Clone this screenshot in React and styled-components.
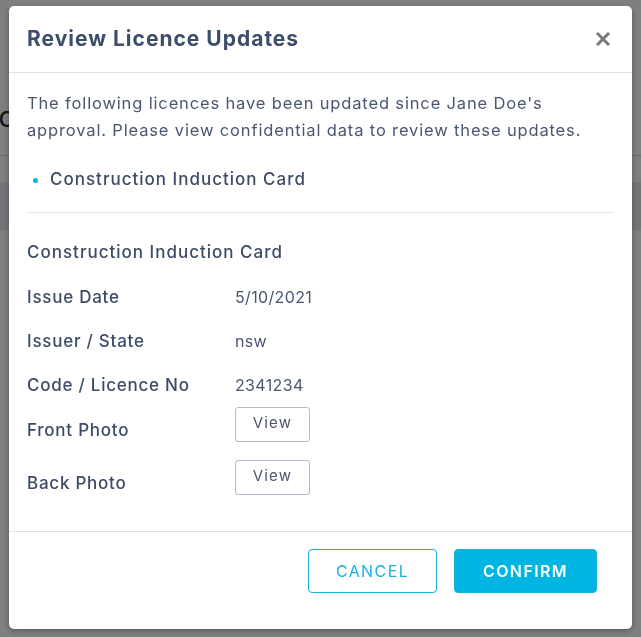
import styled, { createGlobalStyle } from "styled-components";

const GlobalStyle = createGlobalStyle`
  * { box-sizing: border-box; }
  html, body { margin: 0; padding: 0; }
  body {
    font-family: "Inter", "Noto Sans", sans-serif;
    background: #ffffff;
  }
`;

const details = [
  { label: "Issue Date", value: "5/10/2021" },
  { label: "Issuer / State", value: "nsw" },
  { label: "Code / Licence No", value: "2341234" },
];

const photos = ["Front Photo", "Back Photo"];

function App() {
  return (
    <>
      <GlobalStyle />
      <Page>
        <PageTitle>Dashboard</PageTitle>
        <PageTableHead>Status</PageTableHead>
        <PageRow>Pending</PageRow>
      </Page>
      <Overlay>
        <Modal>
          <Header>
            <Title>Review Licence Updates</Title>
            <Close aria-label="close">
              <svg width="14" height="14" viewBox="0 0 14 14">
                <path d="M2 2 L12 12 M12 2 L2 12" stroke="#7a7a7a" strokeWidth="3" strokeLinecap="square" />
              </svg>
            </Close>
          </Header>
          <Body>
            <Intro>
              The following licences have been updated since Jane Doe's
              approval. Please view confidential data to review these updates.
            </Intro>
            <BulletList>
              <li>Construction Induction Card</li>
            </BulletList>
            <Divider />
            <CardTitle>Construction Induction Card</CardTitle>
            {details.map((d) => (
              <Row key={d.label}>
                <Label>{d.label}</Label>
                <Value>{d.value}</Value>
              </Row>
            ))}
            {photos.map((p) => (
              <Row key={p} $photo>
                <Label $photo>{p}</Label>
                <ViewButton>View</ViewButton>
              </Row>
            ))}
          </Body>
          <Footer>
            <Button>CANCEL</Button>
            <Button $primary>CONFIRM</Button>
          </Footer>
        </Modal>
      </Overlay>
    </>
  );
}

const Page = styled.div`
  height: 637px;
  overflow: hidden;
  background: #ffffff;
  color: #1f2633;
`;

const PageTitle = styled.div`
  height: 156px;
  padding: 100px 0 0 0;
  margin-left: -86px;
  font-size: 28px;
  border-bottom: 1px solid #d4d4d4;
`;

const PageTableHead = styled.div`
  height: 48px;
  margin-top: 26px;
  background: #e6e8ef;
  margin-left: -70px;
  padding-top: 12px;
  font-size: 20px;
  font-weight: 700;
`;

const PageRow = styled.div`
  margin-top: 80px;
  margin-left: -78px;
  font-size: 20px;
`;

const Overlay = styled.div`
  position: fixed;
  inset: 0;
  background: rgba(0, 0, 0, 0.5);
  display: flex;
  justify-content: center;
  align-items: flex-start;
  padding-top: 6px;
`;

const Modal = styled.div`
  width: 623px;
  background: #ffffff;
  border-radius: 5px;
  box-shadow: 0 2px 6px rgba(0, 0, 0, 0.3);
  color: #3d4b66;
`;

const Header = styled.div`
  display: flex;
  align-items: center;
  justify-content: space-between;
  padding: 19px 22px 19px 18px;
  border-bottom: 1px solid #dfe1e6;
`;

const Title = styled.h2`
  margin: 0;
  font-size: 21px;
  line-height: 28px;
  font-weight: 700;
  letter-spacing: 1px;
  color: #3d4d6a;
`;

const Close = styled.button`
  border: none;
  background: none;
  padding: 0;
  display: flex;
  cursor: pointer;
`;

const Body = styled.div`
  padding: 17px 18px 18px;
`;

const Intro = styled.p`
  margin: 0;
  font-size: 16.5px;
  line-height: 27px;
  letter-spacing: 0.85px;
  color: #4a5670;
`;

const BulletList = styled.ul`
  margin: 23px 0 0;
  padding: 0 0 0 23px;
  font-size: 17px;
  line-height: 24px;
  font-weight: 500;
  letter-spacing: 1px;
  color: #3d4b66;

  li::marker {
    color: #00b5e2;
    font-size: 16px;
  }
`;

const Divider = styled.hr`
  margin: 21px 0 0;
  border: none;
  border-top: 1px solid #e2e4e8;
`;

const CardTitle = styled.div`
  margin: 27px 0 11px;
  font-size: 17px;
  line-height: 24px;
  font-weight: 500;
  letter-spacing: 1px;
`;

const Row = styled.div`
  display: grid;
  grid-template-columns: 208px auto;
  align-items: start;
  padding: ${(p) => (p.$photo ? "0 0 18px" : "10px 0")};
`;

const Label = styled.div`
  font-size: 17px;
  line-height: 24px;
  font-weight: 500;
  letter-spacing: 0.75px;
  padding-top: ${(p) => (p.$photo ? "11px" : "0")};
`;

const Value = styled.div`
  font-size: 16px;
  line-height: 24px;
  letter-spacing: 0.35px;
  color: #4a5670;
`;

const ViewButton = styled.button`
  justify-self: start;
  width: 75px;
  height: 35px;
  border: 1px solid #b3bccc;
  border-radius: 3px;
  background: #ffffff;
  font-family: inherit;
  font-size: 15px;
  letter-spacing: 1.2px;
  color: #4d5669;
  padding: 0 0 4px;
  cursor: pointer;
`;

const Footer = styled.div`
  display: flex;
  justify-content: flex-end;
  gap: 17px;
  padding: 17px 35px 36px;
  border-top: 1px solid #dfe1e6;
`;

const Button = styled.button`
  height: 44px;
  width: ${(p) => (p.$primary ? "143px" : "129px")};
  border-radius: 4px;
  border: 1px solid #1ab3dd;
  background: ${(p) => (p.$primary ? "#00b5e2" : "#ffffff")};
  color: ${(p) => (p.$primary ? "#ffffff" : "#1ab3dd")};
  font-family: inherit;
  font-size: 16px;
  font-weight: ${(p) => (p.$primary ? 600 : 400)};
  letter-spacing: 1.4px;
  cursor: pointer;
`;

export default App;
